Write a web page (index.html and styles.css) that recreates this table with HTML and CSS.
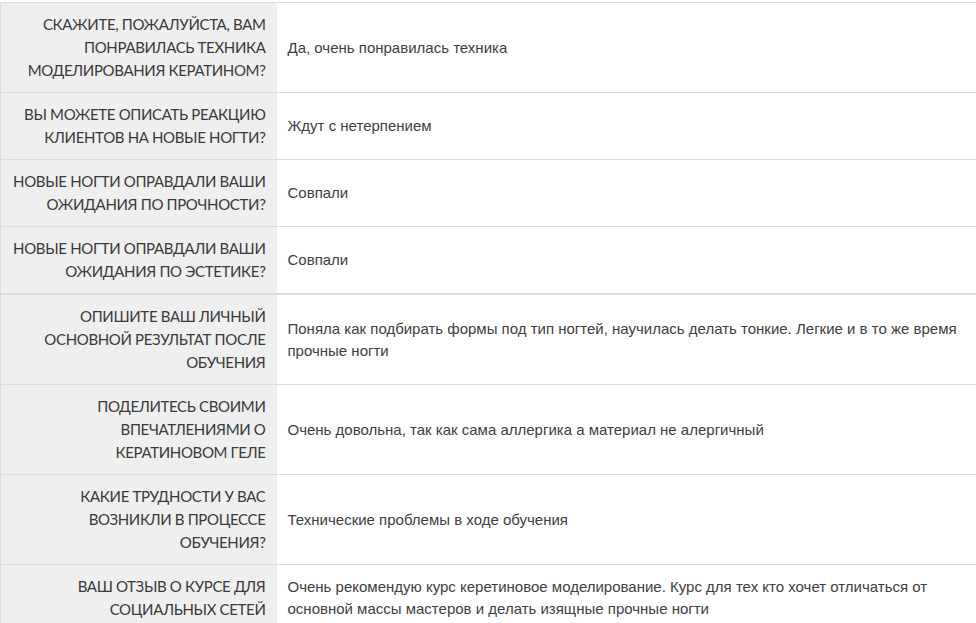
FILE: index.html
```html
<!DOCTYPE html>
<html lang="ru">
<head>
<meta charset="utf-8">
<title>Отзыв</title>
<link rel="stylesheet" href="styles.css">
</head>
<body>
<div class="page">
<table class="answers">
<tbody>
<tr><th class="q">СКАЖИТЕ, ПОЖАЛУЙСТА, ВАМ ПОНРАВИЛАСЬ ТЕХНИКА МОДЕЛИРОВАНИЯ КЕРАТИНОМ?</th><td class="a">Да, очень понравилась техника</td></tr>
<tr><th class="q">ВЫ МОЖЕТЕ ОПИСАТЬ РЕАКЦИЮ КЛИЕНТОВ НА НОВЫЕ НОГТИ?</th><td class="a">Ждут с нетерпением</td></tr>
<tr><th class="q">НОВЫЕ НОГТИ ОПРАВДАЛИ ВАШИ ОЖИДАНИЯ ПО ПРОЧНОСТИ?</th><td class="a">Совпали</td></tr>
<tr><th class="q">НОВЫЕ НОГТИ ОПРАВДАЛИ ВАШИ ОЖИДАНИЯ ПО ЭСТЕТИКЕ?</th><td class="a">Совпали</td></tr>
</tbody>
</table>
<table class="answers second">
<tbody>
<tr><th class="q">ОПИШИТЕ ВАШ ЛИЧНЫЙ ОСНОВНОЙ РЕЗУЛЬТАТ ПОСЛЕ ОБУЧЕНИЯ</th><td class="a">Поняла как подбирать формы под тип ногтей, научилась делать тонкие. Легкие и в то же время прочные ногти</td></tr>
<tr><th class="q">ПОДЕЛИТЕСЬ СВОИМИ ВПЕЧАТЛЕНИЯМИ О КЕРАТИНОВОМ ГЕЛЕ</th><td class="a">Очень довольна, так как сама аллергика а материал не алергичный</td></tr>
<tr><th class="q">КАКИЕ ТРУДНОСТИ У ВАС ВОЗНИКЛИ В ПРОЦЕССЕ ОБУЧЕНИЯ?</th><td class="a">Технические проблемы в ходе обучения</td></tr>
<tr><th class="q">ВАШ ОТЗЫВ О КУРСЕ ДЛЯ СОЦИАЛЬНЫХ СЕТЕЙ</th><td class="a">Очень рекомендую курс керетиновое моделирование. Курс для тех кто хочет отличаться от основной массы мастеров и делать изящные прочные ногти</td></tr>
</tbody>
</table>
</div>
</body>
</html>
```
FILE: styles.css
```css
html, body {
  margin: 0;
  padding: 0;
  background: #fff;
}
.page {
  padding-top: 2px;
}
.answers {
  width: 100%;
  border-collapse: collapse;
  table-layout: fixed;
  border-top: 1px solid #dcdcdc;
}
.answers.second {
  border-top: 2px solid #dcdcdc;
}
.answers tr {
  border-bottom: 1px solid #dcdcdc;
}
.answers tr:last-child {
  border-bottom: 0;
}
.q {
  width: 276px;
  box-sizing: border-box;
  background: #efefef;
  border-left: 1px solid #dcdcdc;
  text-align: right;
  vertical-align: middle;
  font-family: Lato, "Open Sans", sans-serif;
  font-weight: 400;
  font-size: 15px;
  letter-spacing: -0.35px;
  line-height: 23px;
  color: #3a3a3a;
  padding: 10px 11px 10px 8px;
}
.a {
  vertical-align: middle;
  font-family: "Liberation Sans", Arial, sans-serif;
  font-size: 15px;
  line-height: 22px;
  color: #404040;
  padding: 10px 11px;
}
```
